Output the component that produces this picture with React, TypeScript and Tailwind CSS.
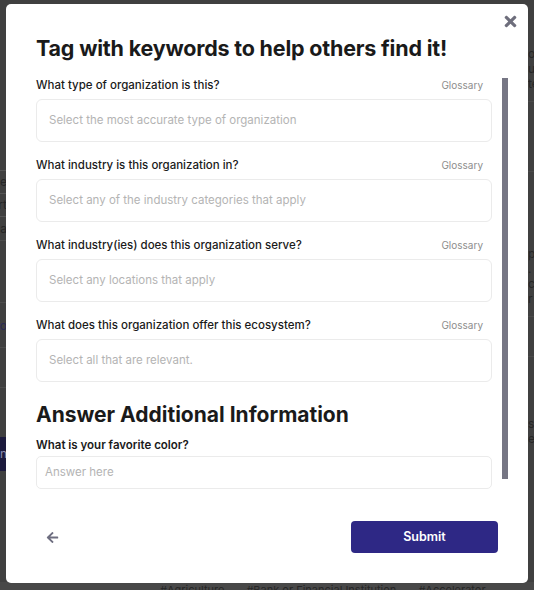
import React from "react";
import { FaTimes, FaArrowLeft } from "react-icons/fa";

const questions = [
  {
    label: "What type of organization is this?",
    placeholder: "Select the most accurate type of organization",
  },
  {
    label: "What industry is this organization in?",
    placeholder: "Select any of the industry categories that apply",
  },
  {
    label: "What industry(ies) does this organization serve?",
    placeholder: "Select any locations that apply",
  },
  {
    label: "What does this organization offer this ecosystem?",
    placeholder: "Select all that are relevant.",
  },
];

const App: React.FC = () => {
  return (
    <div className="relative h-[590px] w-[534px] overflow-hidden bg-[#404040] font-['Inter',sans-serif]">
      {/* dimmed page behind the modal */}
      <div className="flex h-full flex-col">
        <div className="flex flex-1">
          {/* left edge of the page */}
          <div className="flex w-[7px] flex-col overflow-hidden text-[12px] leading-[14px] text-[#262626]">
            <div className="h-[170px] shrink-0" />
            <div className="flex h-[23px] shrink-0 items-center justify-end border-t border-[#555]">Type</div>
            <div className="flex h-[23px] shrink-0 items-center justify-end border-t border-[#555]">Start</div>
            <div className="flex h-[24px] shrink-0 items-center justify-end border-t border-[#555]">Area</div>
            <div className="h-[62px] shrink-0 border-t border-[#4d4d4d]" />
            <div className="flex h-[45px] shrink-0 items-start justify-end border-t border-[#4d4d4d] pt-[16px] text-[#2a2a55]">Info</div>
            <div className="h-[40px] shrink-0 border-t border-[#4d4d4d]" />
            <div className="h-[50px] shrink-0 border-t border-[#4d4d4d]" />
            <div className="flex h-[34px] shrink-0 items-center justify-end bg-[#1c1a3d] text-[#8d8db0]">Join</div>
          </div>
          <div className="w-[521px]" />
          {/* right edge of the page */}
          <div className="flex w-[6px] flex-col overflow-hidden whitespace-nowrap text-[12px] leading-[15px] text-[#262626]">
            <div className="h-[46px] shrink-0" />
            <div>organization</div>
            <div>ur</div>
            <div>team</div>
            <div className="mt-[10px] h-[70px] shrink-0 border-t border-[#4a4a4a]" />
            <div className="h-[75px] shrink-0 border-t border-[#4a4a4a]" />
            <div>provide</div>
            <div>.</div>
            <div>c</div>
            <div>r</div>
            <div className="mt-[10px] h-[40px] shrink-0 border-t border-[#4a4a4a]" />
            <div className="h-[60px] shrink-0 border-t border-[#4a4a4a]" />
            <div>s,</div>
            <div>ex</div>
          </div>
        </div>
        <div className="flex h-[8px] gap-[22px] overflow-hidden bg-[#484848] pl-[160px] pt-[1px] text-[11px] leading-[14px] whitespace-nowrap text-[#262626]">
          <span>#Agriculture</span>
          <span>#Bank or Financial Institution</span>
          <span>#Accelerator</span>
        </div>
      </div>

      {/* modal */}
      <div className="absolute left-[6px] top-[4px] flex h-[579px] w-[522px] flex-col rounded-[5px] bg-white">
        <div className="flex justify-end pr-[9px] pt-[9px]">
          <FaTimes className="text-[17px] text-[#6e6e7c]" />
        </div>
        <h1 className="ml-[30px] mt-[4px] text-[21.5px] font-bold leading-[28px] tracking-[-0.2px] text-[#1a1a1a]">
          Tag with keywords to help others find it!
        </h1>

        <div className="ml-[30px] mt-[16px] flex items-start gap-[10px]">
          <div className="flex w-[456px] flex-col">
            {questions.map((q) => (
              <div key={q.label} className="mb-[16px] flex flex-col">
                <div className="flex items-center justify-between pr-[9px]">
                  <span className="text-[11.5px] font-medium leading-[14px] text-[#1a1a1a]">
                    {q.label}
                  </span>
                  <span className="text-[10px] leading-[14px] text-[#8d8d8d]">Glossary</span>
                </div>
                <div className="mt-[7px] flex h-[43px] items-center rounded-[6px] border border-[#ebebeb] px-[12px] text-[11.5px] text-[#b4b4b4]">
                  {q.placeholder}
                </div>
              </div>
            ))}
            <h2 className="mt-[3px] text-[21px] font-bold leading-[28px] text-[#1a1a1a]">
              Answer Additional Information
            </h2>
            <span className="mt-[8px] text-[11.5px] font-semibold leading-[16px] text-[#1a1a1a]">
              What is your favorite color?
            </span>
            <div className="mt-[3px] flex h-[33px] items-center rounded-[5px] border border-[#ebebeb] px-[8px] text-[11.5px] text-[#b4b4b4]">
              Answer here
            </div>
          </div>
          <div className="h-[401px] w-[6px] bg-[#767684]" />
        </div>

        <div className="mt-auto mb-[30px] flex items-center justify-between pl-[40px] pr-[30px]">
          <FaArrowLeft className="text-[13px] text-[#6e6e80]" />
          <button className="h-[32px] w-[147px] rounded-[4px] bg-[#2e2885] text-[12.5px] font-semibold text-white">
            Submit
          </button>
        </div>
      </div>
    </div>
  );
};

export default App;
